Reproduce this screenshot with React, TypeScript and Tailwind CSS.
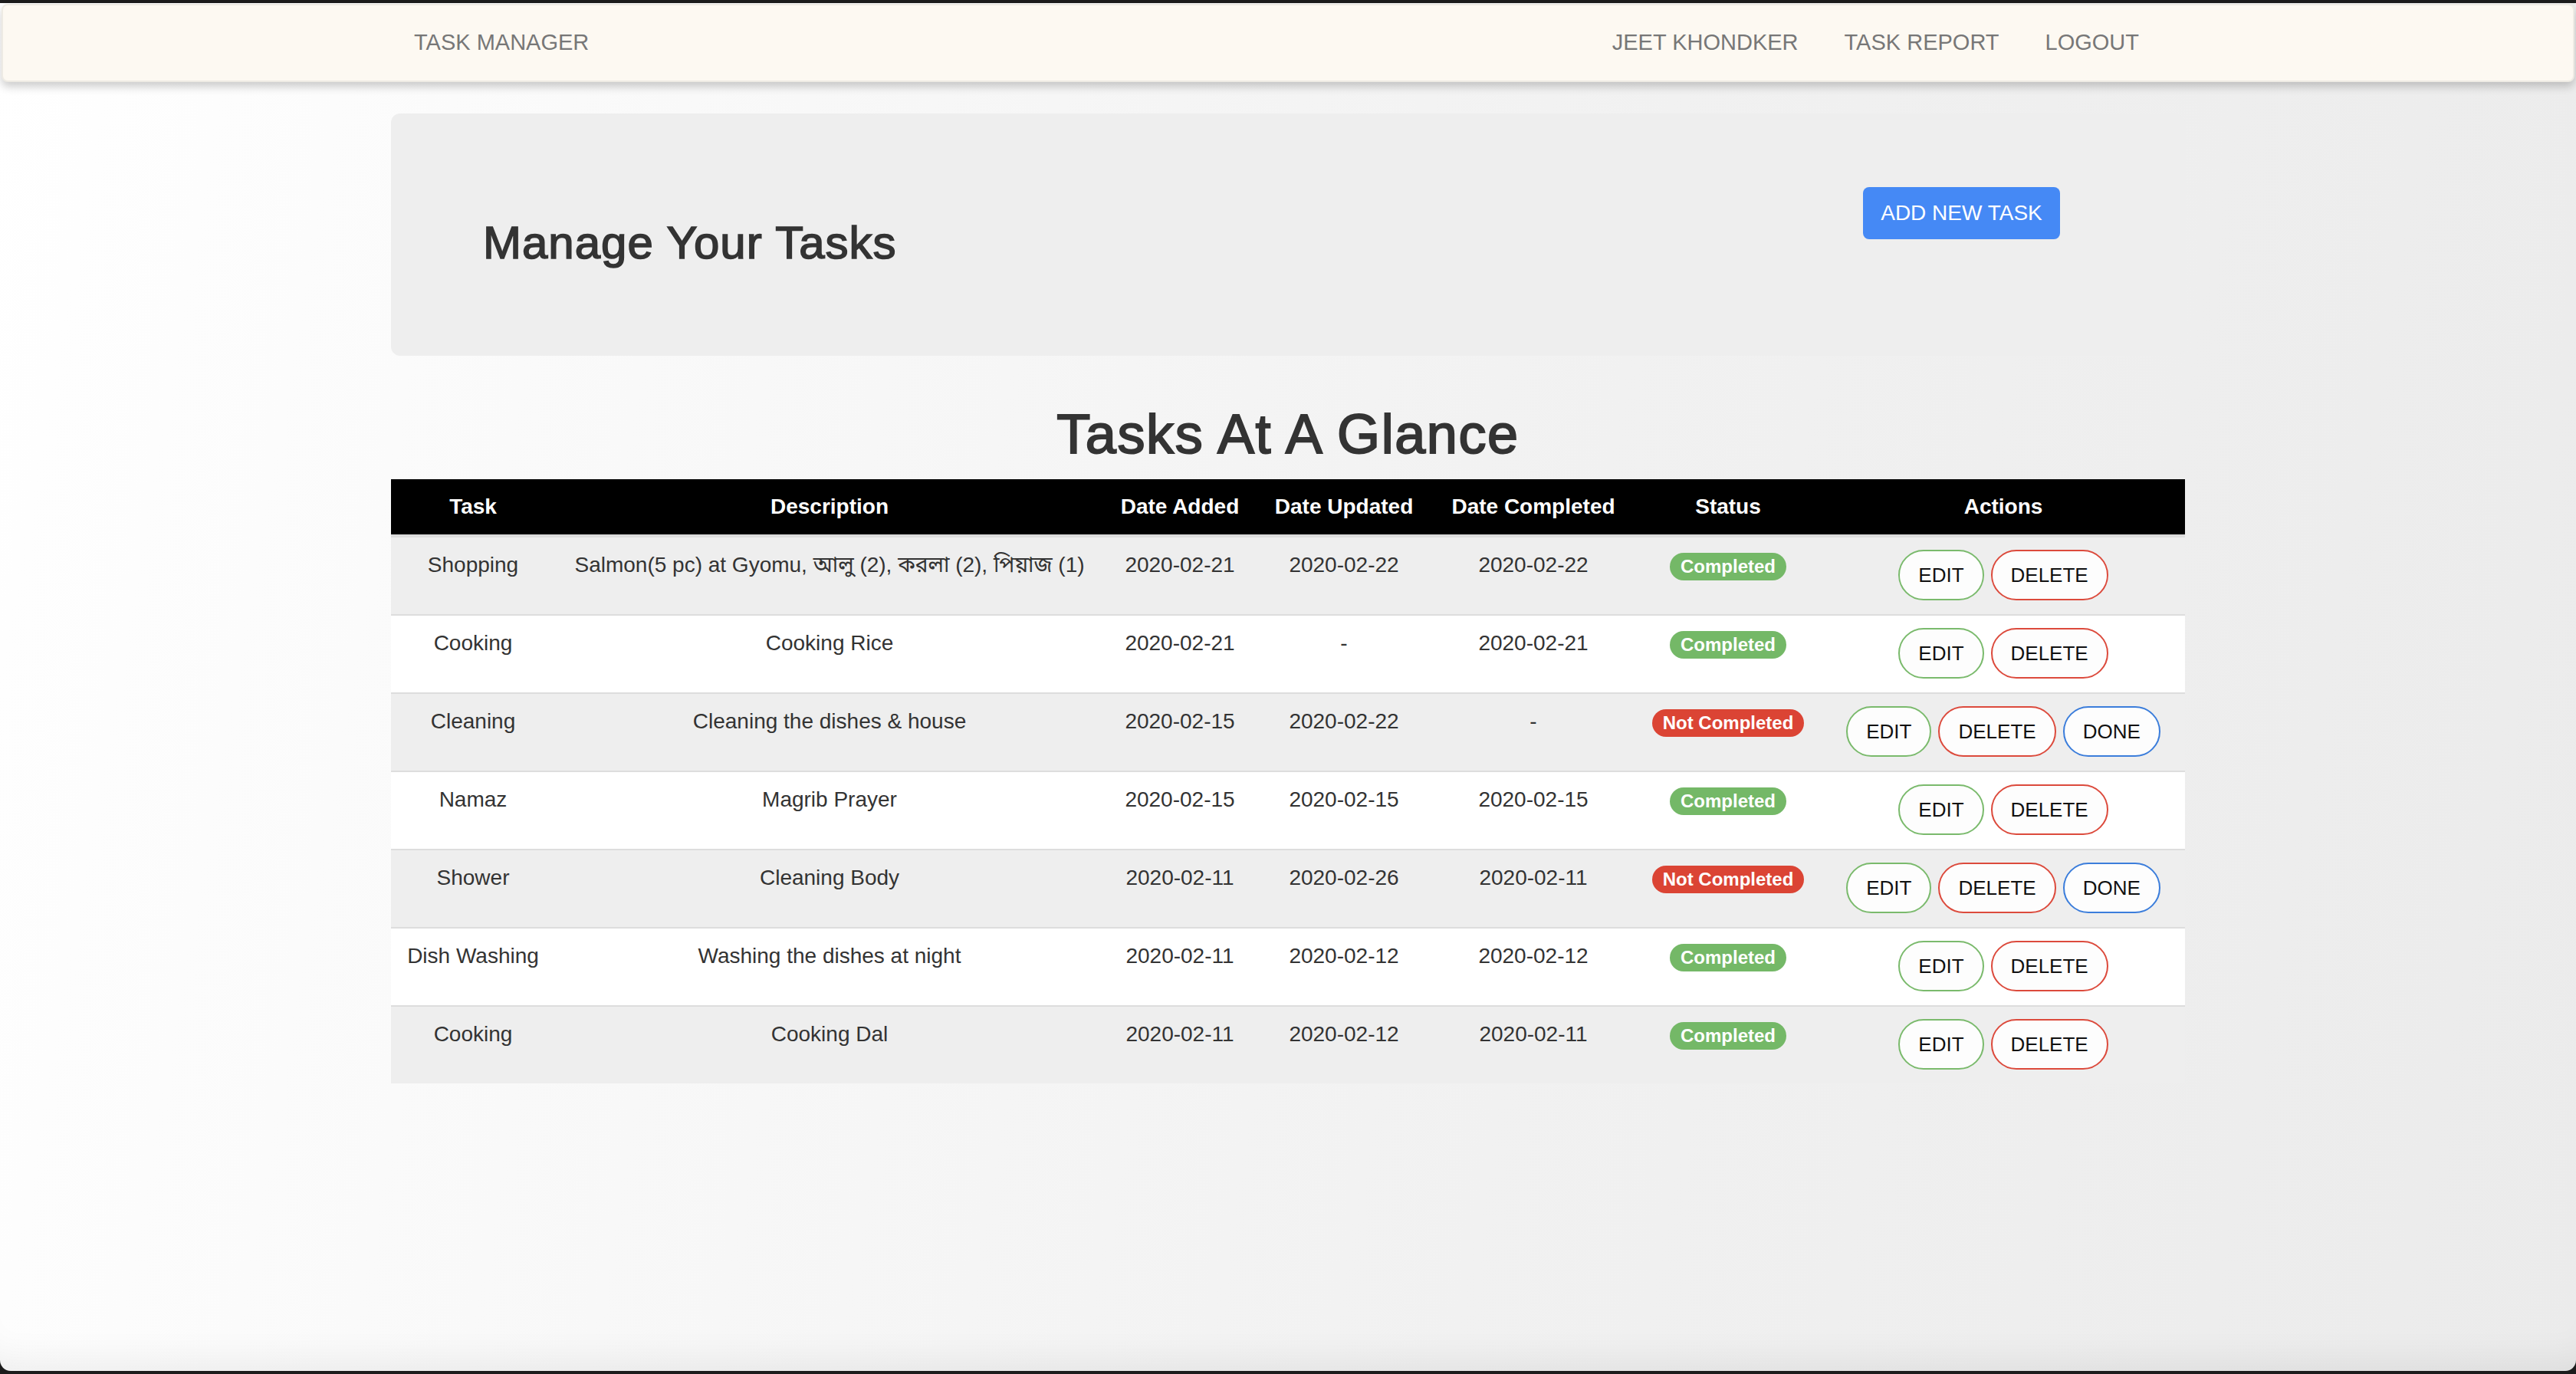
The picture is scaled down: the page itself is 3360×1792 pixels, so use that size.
import React from "react";

type Task = {
  task: string;
  desc: string;
  added: string;
  updated: string;
  completed: string;
  done: boolean;
};

const tasks: Task[] = [
  { task: "Shopping", desc: "Salmon(5 pc) at Gyomu, আলু (2), করলা (2), পিয়াজ (1)", added: "2020-02-21", updated: "2020-02-22", completed: "2020-02-22", done: true },
  { task: "Cooking", desc: "Cooking Rice", added: "2020-02-21", updated: "-", completed: "2020-02-21", done: true },
  { task: "Cleaning", desc: "Cleaning the dishes & house", added: "2020-02-15", updated: "2020-02-22", completed: "-", done: false },
  { task: "Namaz", desc: "Magrib Prayer", added: "2020-02-15", updated: "2020-02-15", completed: "2020-02-15", done: true },
  { task: "Shower", desc: "Cleaning Body", added: "2020-02-11", updated: "2020-02-26", completed: "2020-02-11", done: false },
  { task: "Dish Washing", desc: "Washing the dishes at night", added: "2020-02-11", updated: "2020-02-12", completed: "2020-02-12", done: true },
  { task: "Cooking", desc: "Cooking Dal", added: "2020-02-11", updated: "2020-02-12", completed: "2020-02-11", done: true },
];

const headers = ["Task", "Description", "Date Added", "Date Updated", "Date Completed", "Status", "Actions"];

function Cell({ children }: { children: React.ReactNode }) {
  return (
    <div className="px-[16px] pt-[16px] text-center text-[28px] leading-[40px] text-[#333] whitespace-nowrap">
      {children}
    </div>
  );
}

function ActionButton({ label, color }: { label: string; color: "green" | "red" | "blue" }) {
  const border =
    color === "green" ? "border-[#7aba6c]" : color === "red" ? "border-[#dc4a3c]" : "border-[#3b7ddb]";
  return (
    <button
      className={`h-[66px] px-[24px] rounded-full border-2 ${border} bg-[#fdfdfd] font-['Liberation_Sans',Arial,sans-serif] text-[26px] leading-none text-[#111]`}
    >
      {label}
    </button>
  );
}

export default function App() {
  return (
    <div className="min-h-screen w-full flex flex-col bg-[#1c1c1c] font-['Liberation_Sans','Noto_Sans_Bengali',Arial,sans-serif]">
      <div className="h-[4px] bg-[#1c1c1c]" />
      <div className="flex-1 flex flex-col rounded-b-[14px] bg-[linear-gradient(100deg,#ffffff_0%,#f9f9f9_25%,#f1f1f1_60%,#ebebeb_100%)] shadow-[inset_0_-50px_50px_-40px_rgba(0,0,0,0.07)]">
        {/* Navbar */}
        <nav className="mx-[2px] mt-[1px] h-[102px] rounded-[8px] border-2 border-[#eeebe4] bg-[#fdf9f2] shadow-[0_6px_12px_rgba(0,0,0,0.2)] flex items-center">
          <div className="mx-auto w-[2340px] px-[30px] flex items-center justify-between text-[29px] text-[#777]">
            <span>TASK MANAGER</span>
            <div className="flex items-center">
              <span className="px-[30px]">JEET KHONDKER</span>
              <span className="px-[30px]">TASK REPORT</span>
              <span className="px-[30px]">LOGOUT</span>
            </div>
          </div>
        </nav>

        {/* Jumbotron */}
        <div className="mx-auto mt-[41px] w-[2340px] h-[316px] rounded-[12px] bg-[#eeeeee] px-[120px] pt-[96px] flex items-start">
          <h1 className="w-[1800px] mt-[40px] text-[60px] leading-[66px] tracking-[1px] text-[#333] [-webkit-text-stroke:1.6px_#333]">
            Manage Your Tasks
          </h1>
          <button className="h-[68px] w-[257px] rounded-[8px] bg-[#4589f5] text-white font-['Liberation_Sans',Arial,sans-serif] text-[28px] leading-none">
            ADD NEW TASK
          </button>
        </div>

        {/* Table section */}
        <div className="mx-auto w-[2340px] mb-[60px]">
          <h2 className="mt-[63px] mb-[19px] text-center text-[72px] leading-[79px] tracking-[1.6px] text-[#333] [-webkit-text-stroke:2px_#333]">
            Tasks At A Glance
          </h2>

          <div className="grid grid-cols-[214px_716px_198px_230px_264px_244px_474px] h-[72px] bg-black items-center">
            {headers.map((h) => (
              <div key={h} className="px-[16px] text-center text-[28px] font-bold text-white whitespace-nowrap">
                {h}
              </div>
            ))}
          </div>
          <div className="h-[4px] bg-[#dddddd]" />

          {tasks.map((t, i) => (
            <div
              key={i}
              className={`grid grid-cols-[214px_716px_198px_230px_264px_244px_474px] ${
                i === 0 ? "h-[100px]" : "h-[102px] border-t-2 border-[#dddddd]"
              } ${i % 2 === 0 ? "bg-[#eeeeee]" : "bg-white"}`}
            >
              <Cell>{t.task}</Cell>
              <Cell>{t.desc}</Cell>
              <Cell>{t.added}</Cell>
              <Cell>{t.updated}</Cell>
              <Cell>{t.completed}</Cell>
              <div className="px-[16px] pt-[20px] flex justify-center items-start">
                <span
                  className={`h-[36px] px-[14px] rounded-full text-[24px] leading-[36px] font-bold text-white whitespace-nowrap ${
                    t.done ? "bg-[#74b867]" : "bg-[#db4434]"
                  }`}
                >
                  {t.done ? "Completed" : "Not Completed"}
                </span>
              </div>
              <div className="px-[16px] pt-[16px] flex justify-center items-start gap-[9px]">
                <ActionButton label="EDIT" color="green" />
                <ActionButton label="DELETE" color="red" />
                {!t.done && <ActionButton label="DONE" color="blue" />}
              </div>
            </div>
          ))}
        </div>
      </div>
      <div className="h-[4px] bg-[#1c1c1c]" />
    </div>
  );
}
